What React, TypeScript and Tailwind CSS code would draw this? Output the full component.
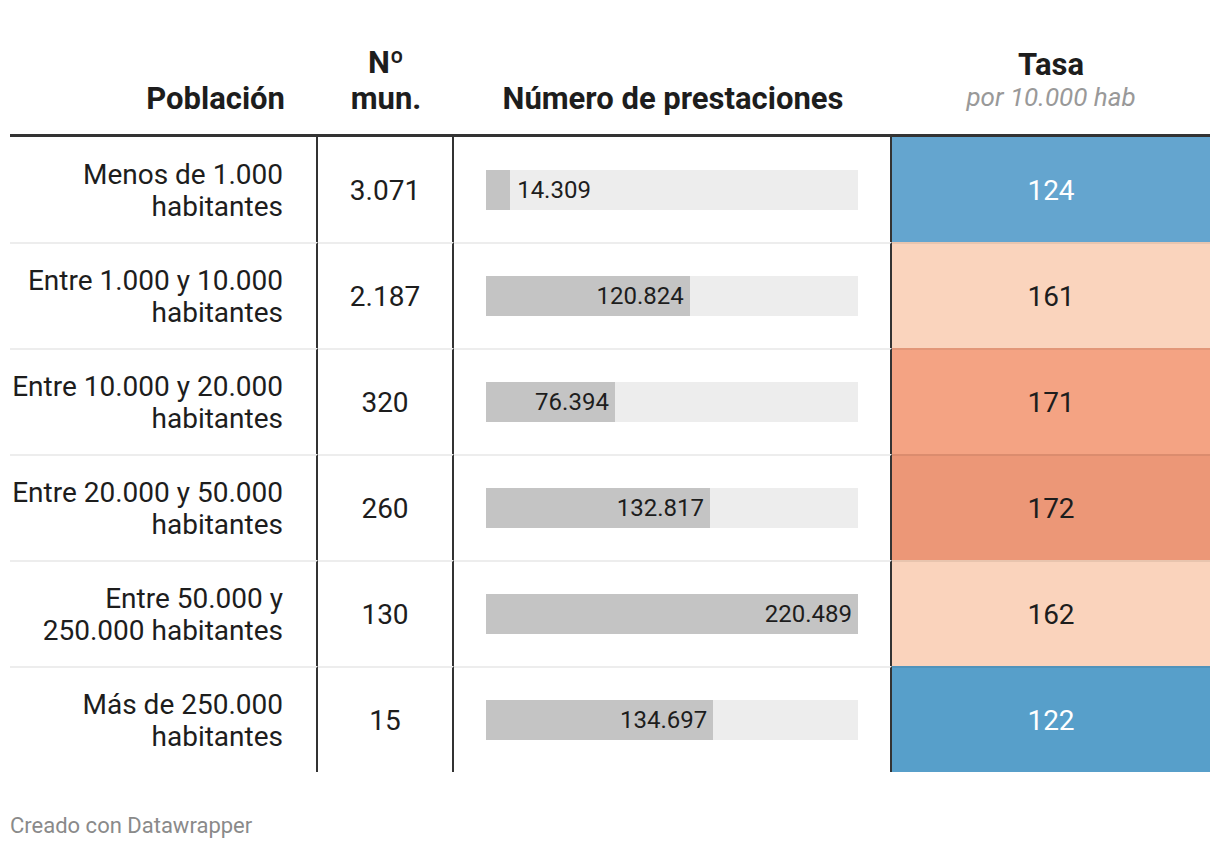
import React from "react"

type Row = {
  label: string[]
  mun: string
  value: number
  text: string
  tasa: string
  bg: string
  light: boolean
}

const MAX = 220489

const rows: Row[] = [
  { label: ["Menos de 1.000", "habitantes"], mun: "3.071", value: 14309, text: "14.309", tasa: "124", bg: "bg-[#64a5cf]", light: true },
  { label: ["Entre 1.000 y 10.000", "habitantes"], mun: "2.187", value: 120824, text: "120.824", tasa: "161", bg: "bg-[#fad4bd]", light: false },
  { label: ["Entre 10.000 y 20.000", "habitantes"], mun: "320", value: 76394, text: "76.394", tasa: "171", bg: "bg-[#f4a383]", light: false },
  { label: ["Entre 20.000 y 50.000", "habitantes"], mun: "260", value: 132817, text: "132.817", tasa: "172", bg: "bg-[#ec9777]", light: false },
  { label: ["Entre 50.000 y", "250.000 habitantes"], mun: "130", value: 220489, text: "220.489", tasa: "162", bg: "bg-[#fad3bc]", light: false },
  { label: ["Más de 250.000", "habitantes"], mun: "15", value: 134697, text: "134.697", tasa: "122", bg: "bg-[#579fca]", light: true },
]

function Bar({ value, text }: { value: number; text: string }) {
  const pct = (value / MAX) * 100
  const inside = pct > 20
  return (
    <div className="flex h-[40px] w-full items-center bg-[#ededed]">
      <div
        className="flex h-full items-center justify-end bg-[#c4c4c4] pr-[6px]"
        style={{ width: `${pct}%` }}
      >
        {inside && <span className="text-[24px] leading-none text-[#1d1d1d]">{text}</span>}
      </div>
      {!inside && <span className="pl-[7px] text-[24px] leading-none text-[#1d1d1d]">{text}</span>}
    </div>
  )
}

export default function App() {
  return (
    <div className="min-h-screen bg-white px-[10px] font-['Roboto',sans-serif] text-[#1d1d1d]">
      {/* header */}
      <div className="flex h-[137px] items-end border-b-[3px] border-[#333] pb-[17px]">
        <div className="w-[308px] pr-[33px] text-right text-[31px] font-bold leading-[36px]">Población</div>
        <div className="w-[136px] text-center text-[31px] font-bold leading-[36px]">
          Nº
          <br />
          mun.
        </div>
        <div className="w-[438px] text-center text-[31px] font-bold leading-[36px]">Número de prestaciones</div>
        <div className="flex flex-1 flex-col items-center pb-[5px]">
          <div className="text-[31px] font-bold leading-[34px]">Tasa</div>
          <div className="text-[26px] italic leading-[30px] text-[#999]">por 10.000 hab</div>
        </div>
      </div>

      {/* body */}
      {rows.map((r, i) => (
        <div key={i} className="flex">
          <div
            className={`flex w-[308px] items-center justify-end border-r-2 border-r-[#333] pt-[2px] pr-[33px] text-right text-[28px] leading-[32px] ${
              i === 0 ? "h-[105px]" : "h-[106px] border-t-2 border-t-black/[0.07]"
            }`}
          >
            <div>
              {r.label[0]}
              <br />
              {r.label[1]}
            </div>
          </div>
          <div
            className={`flex w-[136px] items-center justify-center border-r-2 border-r-[#333] pt-[2px] text-[28px] ${
              i === 0 ? "h-[105px]" : "h-[106px] border-t-2 border-t-black/[0.07]"
            }`}
          >
            {r.mun}
          </div>
          <div
            className={`flex w-[438px] items-center border-r-2 border-r-[#333] px-[32px] ${
              i === 0 ? "h-[105px]" : "h-[106px] border-t-2 border-t-black/[0.07]"
            }`}
          >
            <Bar value={r.value} text={r.text} />
          </div>
          <div
            className={`flex flex-1 items-center justify-center pt-[2px] text-[28px] ${r.bg} ${
              r.light ? "text-white" : "text-[#1d1d1d]"
            } ${i === 0 ? "h-[105px]" : "h-[106px] border-t-2 border-t-black/[0.07]"}`}
          >
            {r.tasa}
          </div>
        </div>
      ))}

      <div className="pt-[37px] text-[22px] text-[#8a8a8a]">Creado con Datawrapper</div>
    </div>
  )
}
